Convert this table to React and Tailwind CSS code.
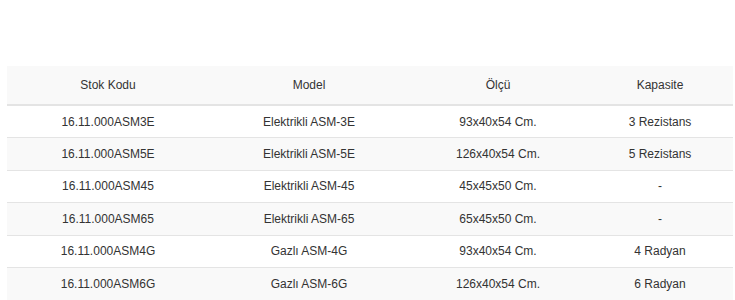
const rows = [
  { kod: "16.11.000ASM3E", model: "Elektrikli ASM-3E", olcu: "93x40x54 Cm.", kapasite: "3 Rezistans" },
  { kod: "16.11.000ASM5E", model: "Elektrikli ASM-5E", olcu: "126x40x54 Cm.", kapasite: "5 Rezistans" },
  { kod: "16.11.000ASM45", model: "Elektrikli ASM-45", olcu: "45x45x50 Cm.", kapasite: "-" },
  { kod: "16.11.000ASM65", model: "Elektrikli ASM-65", olcu: "65x45x50 Cm.", kapasite: "-" },
  { kod: "16.11.000ASM4G", model: "Gazlı ASM-4G", olcu: "93x40x54 Cm.", kapasite: "4 Radyan" },
  { kod: "16.11.000ASM6G", model: "Gazlı ASM-6G", olcu: "126x40x54 Cm.", kapasite: "6 Radyan" },
];

export default function App() {
  return (
    <div className="w-[735px] h-[300px] overflow-hidden bg-white pt-[66px] pl-[7px] font-['Liberation_Sans',Arial,sans-serif] text-[12px] text-[#333]">
      <table className="w-[726px] border-collapse table-fixed">
        <colgroup>
          <col className="w-[202px]" />
          <col className="w-[200px]" />
          <col className="w-[178px]" />
          <col className="w-[146px]" />
        </colgroup>
        <thead>
          <tr className="bg-[#f9f9f9] border-b-2 border-[#e4e4e4]">
            <th className="h-[39px] p-0 text-center font-normal">Stok Kodu</th>
            <th className="h-[39px] p-0 text-center font-normal">Model</th>
            <th className="h-[39px] p-0 text-center font-normal">Ölçü</th>
            <th className="h-[39px] p-0 text-center font-normal">Kapasite</th>
          </tr>
        </thead>
        <tbody>
          {rows.map((r, i) => (
            <tr key={r.kod} className={`border-b border-[#e4e4e4] ${i % 2 === 1 ? "bg-[#f9f9f9]" : "bg-white"}`}>
              <td className="h-[32.5px] p-0 text-center">{r.kod}</td>
              <td className="h-[32.5px] p-0 text-center">{r.model}</td>
              <td className="h-[32.5px] p-0 text-center">{r.olcu}</td>
              <td className="h-[32.5px] p-0 text-center">{r.kapasite}</td>
            </tr>
          ))}
        </tbody>
      </table>
    </div>
  );
}
